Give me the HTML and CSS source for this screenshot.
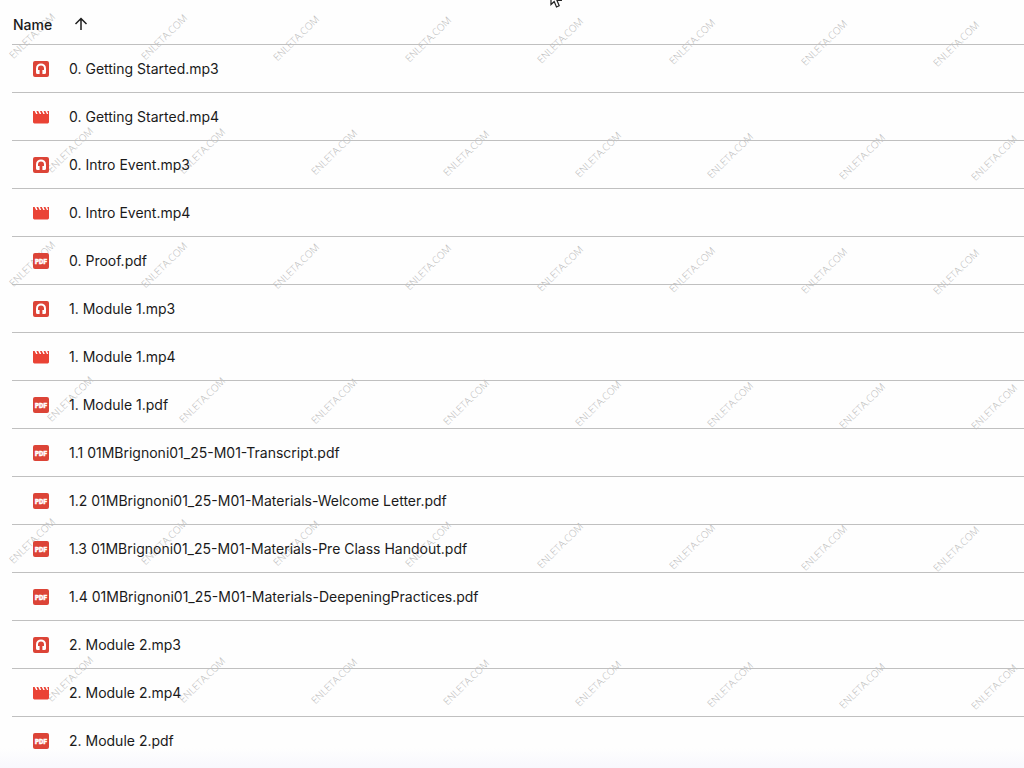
FILE: index.html
```html
<!DOCTYPE html>
<html lang="en">
<head>
  <meta charset="UTF-8">
  <meta name="viewport" content="width=device-width, initial-scale=1.0">
  <title>Files</title>
  <link rel="stylesheet" href="styles.css">
</head>
<body>

  <!-- File type icons -->
  <svg class="sprite" aria-hidden="true">
    <symbol id="icon-audio" viewBox="0 0 16 16">
      <rect width="16" height="16" rx="2" fill="#dc4437"/>
      <path d="M4 11V7.400a4 4 0 0 1 8 0V11" fill="none" stroke="#fff" stroke-width="2"/>
      <path d="M3 9h3.600v4H4.500A1.500 1.500 0 0 1 3 11.500zM9.400 9H13v2.500a1.500 1.500 0 0 1-1.500 1.500H9.400z" fill="#fff"/>
    </symbol>
    <symbol id="icon-video" viewBox="0 0 16 16">
      <path d="M0 2h1.600l1.500 3h1.500L3.400 2h1.800l1.500 3h1.500L7 2h1.800l1.500 3h1.500L10.600 2h1.800l1.500 3h1.300L14.200 2H16v11a1.400 1.400 0 0 1-1.400 1.400H1.400A1.400 1.400 0 0 1 0 13z" fill="#ea4335"/>
    </symbol>
    <symbol id="icon-pdf" viewBox="0 0 16 16">
      <rect width="16" height="16" rx="2" fill="#dc4437"/>
      <text x="8" y="10.500" text-anchor="middle" class="pdf-label">PDF</text>
    </symbol>
  </svg>

  <main>
    <table class="files">
      <thead>
        <tr>
          <th>
            <button class="sort">Name
              <svg viewBox="0 0 14 14" aria-hidden="true"><path d="M7 13V2M1.500 7L7 1.500L12.500 7"/></svg>
            </button>
          </th>
        </tr>
      </thead>
      <tbody>
        <tr><td><a href="#"><svg><use href="#icon-audio"/></svg>0. Getting Started.mp3</a></td></tr>
        <tr><td><a href="#"><svg><use href="#icon-video"/></svg>0. Getting Started.mp4</a></td></tr>
        <tr><td><a href="#"><svg><use href="#icon-audio"/></svg>0. Intro Event.mp3</a></td></tr>
        <tr><td><a href="#"><svg><use href="#icon-video"/></svg>0. Intro Event.mp4</a></td></tr>
        <tr><td><a href="#"><svg><use href="#icon-pdf"/></svg>0. Proof.pdf</a></td></tr>
        <tr><td><a href="#"><svg><use href="#icon-audio"/></svg>1. Module 1.mp3</a></td></tr>
        <tr><td><a href="#"><svg><use href="#icon-video"/></svg>1. Module 1.mp4</a></td></tr>
        <tr><td><a href="#"><svg><use href="#icon-pdf"/></svg>1. Module 1.pdf</a></td></tr>
        <tr><td><a href="#"><svg><use href="#icon-pdf"/></svg>1.1 01MBrignoni01_25-M01-Transcript.pdf</a></td></tr>
        <tr><td><a href="#"><svg><use href="#icon-pdf"/></svg>1.2 01MBrignoni01_25-M01-Materials-Welcome Letter.pdf</a></td></tr>
        <tr><td><a href="#"><svg><use href="#icon-pdf"/></svg>1.3 01MBrignoni01_25-M01-Materials-Pre Class Handout.pdf</a></td></tr>
        <tr><td><a href="#"><svg><use href="#icon-pdf"/></svg>1.4 01MBrignoni01_25-M01-Materials-DeepeningPractices.pdf</a></td></tr>
        <tr><td><a href="#"><svg><use href="#icon-audio"/></svg>2. Module 2.mp3</a></td></tr>
        <tr><td><a href="#"><svg><use href="#icon-video"/></svg>2. Module 2.mp4</a></td></tr>
        <tr><td><a href="#"><svg><use href="#icon-pdf"/></svg>2. Module 2.pdf</a></td></tr>
      </tbody>
    </table>
  </main>

  <div class="watermark" aria-hidden="true">
    <div class="mark-row"><span>ENLETA.COM</span><span>ENLETA.COM</span><span>ENLETA.COM</span><span>ENLETA.COM</span><span>ENLETA.COM</span><span>ENLETA.COM</span><span>ENLETA.COM</span><span>ENLETA.COM</span></div>
    <div class="mark-row shifted"><span>ENLETA.COM</span><span>ENLETA.COM</span><span>ENLETA.COM</span><span>ENLETA.COM</span><span>ENLETA.COM</span><span>ENLETA.COM</span><span>ENLETA.COM</span><span>ENLETA.COM</span></div>
    <div class="mark-row"><span>ENLETA.COM</span><span>ENLETA.COM</span><span>ENLETA.COM</span><span>ENLETA.COM</span><span>ENLETA.COM</span><span>ENLETA.COM</span><span>ENLETA.COM</span><span>ENLETA.COM</span></div>
    <div class="mark-row shifted"><span>ENLETA.COM</span><span>ENLETA.COM</span><span>ENLETA.COM</span><span>ENLETA.COM</span><span>ENLETA.COM</span><span>ENLETA.COM</span><span>ENLETA.COM</span><span>ENLETA.COM</span></div>
    <div class="mark-row"><span>ENLETA.COM</span><span>ENLETA.COM</span><span>ENLETA.COM</span><span>ENLETA.COM</span><span>ENLETA.COM</span><span>ENLETA.COM</span><span>ENLETA.COM</span><span>ENLETA.COM</span></div>
    <div class="mark-row shifted"><span>ENLETA.COM</span><span>ENLETA.COM</span><span>ENLETA.COM</span><span>ENLETA.COM</span><span>ENLETA.COM</span><span>ENLETA.COM</span><span>ENLETA.COM</span><span>ENLETA.COM</span></div>
  </div>

  <svg class="cursor" viewBox="0 0 12 18" aria-hidden="true">
    <path d="M1 1v13.500l3.200-3L6.500 17l2.700-1.200L7 10.500h4.300z" fill="#fff" stroke="#222" stroke-width="1.200"/>
  </svg>

</body>
</html>
```
FILE: styles.css
```css
body {
  margin: 0;
  min-height: 100vh;
  position: relative;
  overflow-x: hidden;
  font-family: Inter, 'Noto Sans', sans-serif;
  font-size: 14px;
  color: #1a1a1a;
  background: linear-gradient(to top, #f8f8fd, #fefefe 20px);
}
main {
  position: relative;
  z-index: 1;
  padding-left: 12px;
}
.sprite {
  display: none;
}
.pdf-label {
  font: 900 6px Inter, sans-serif;
  fill: #fff;
  stroke: #fff;
  stroke-width: 0.4px;
}
.files {
  width: 100%;
  border-collapse: separate;
  border-spacing: 0;
}
th, td {
  box-sizing: border-box;
  height: 48px;
  padding: 0;
  border-bottom: 1px solid #c0c0c0;
  text-align: left;
}
th {
  height: 45px;
  padding: 4px 0 0;
}
tbody tr:last-child td {
  border-bottom: none;
}
.sort {
  display: flex;
  align-items: center;
  gap: 22px;
  padding: 0 1px;
  border: none;
  background: none;
  font: inherit;
  font-weight: 500;
  color: inherit;
  cursor: pointer;
}
.sort svg {
  width: 14px;
  height: 14px;
  fill: none;
  stroke: #1f1f1f;
  stroke-width: 1.5;
}
td a {
  display: flex;
  align-items: center;
  gap: 20px;
  padding-left: 21px;
  line-height: 20px;
  color: inherit;
  text-decoration: none;
}
td svg {
  width: 16px;
  height: 16px;
}

/* Watermark behind the names and icons */
.watermark {
  position: absolute;
  inset: 0;
  display: grid;
  grid-template-rows: 114px 114px 135px 142px 138px 70px;
  overflow: hidden;
  pointer-events: none;
}
.mark-row {
  display: flex;
  height: 70px;
  margin-left: -34px;
  transform: rotate(0.5deg);
  transform-origin: left center;
}
.mark-row.shifted {
  margin-left: 4px;
}
.mark-row span {
  flex: 0 0 132px;
  line-height: 70px;
  text-align: center;
  font-family: 'Open Sans', sans-serif;
  font-size: 10px;
  font-weight: 300;
  color: #b8b8b8;
  transform: rotate(-45deg);
}
.cursor {
  position: absolute;
  top: -10px;
  left: 550px;
  width: 12px;
  height: 18px;
}
```
